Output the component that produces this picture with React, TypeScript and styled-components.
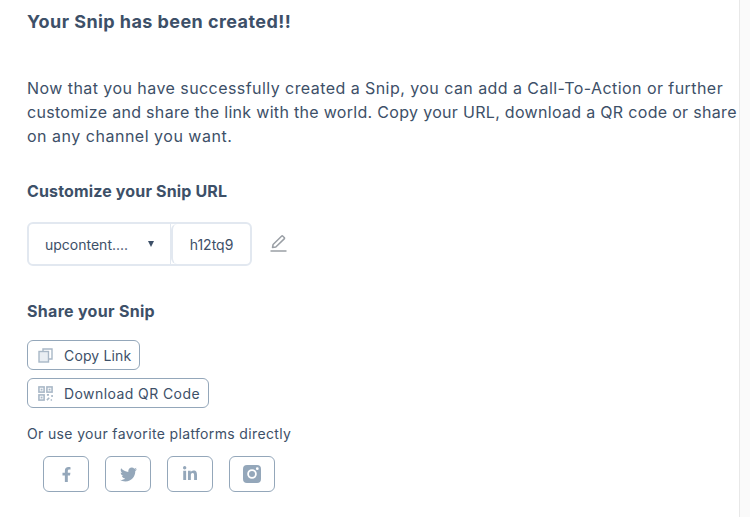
import React from 'react';
import styled, { createGlobalStyle } from 'styled-components';
import { FaFacebookF, FaTwitter, FaLinkedinIn } from 'react-icons/fa';

const GlobalStyle = createGlobalStyle`
    html, body {
        margin: 0;
        padding: 0;
        height: 100%;
        overflow: hidden;
        background: #fff;
    }
    body {
        font-family: Inter, "Open Sans", sans-serif;
        color: #3d5068;
    }
`;

const Page = styled.div`
    display: flex;
    width: 750px;
    height: 517px;
    overflow: hidden;
`;

const Content = styled.main`
    width: 739px;
    flex-shrink: 0;
    padding: 11px 0 0 27px;
    box-sizing: border-box;
    white-space: nowrap;
`;

const Scrollbar = styled.div`
    flex: 1;
    background: #fafafa;
    border-left: 1px solid #e8e8e8;
`;

const Title = styled.h1`
    margin: 0;
    font-size: 18px;
    line-height: 22px;
    font-weight: 700;
    letter-spacing: 0.43px;
`;

const Intro = styled.p`
    margin: 43px 0 0;
    font-size: 16px;
    line-height: 24px;
    font-weight: 400;
`;

const IntroLine = styled.span<{ $tracking: number }>`
    display: block;
    letter-spacing: ${p => p.$tracking}px;
`;

const SectionTitle = styled.h2<{ $top: number; $tracking: number }>`
    margin: ${p => p.$top}px 0 0;
    font-size: 16px;
    line-height: 22px;
    font-weight: 700;
    letter-spacing: ${p => p.$tracking}px;
`;

const UrlRow = styled.div`
    display: flex;
    align-items: center;
    margin-top: 20px;
`;

const UrlGroup = styled.div`
    display: flex;
    width: 225px;
    height: 44px;
    box-sizing: border-box;
    border: 2px solid #e2e8f0;
    border-radius: 6px;
    font-size: 14px;
`;

const DomainSelect = styled.div`
    width: 142px;
    display: flex;
    align-items: center;
    justify-content: space-between;
    box-sizing: border-box;
    padding: 0 16px 0 16px;
    border-right: 1px solid #e2e8f0;
`;

const Caret = styled.span`
    width: 0;
    height: 0;
    border-left: 3.5px solid transparent;
    border-right: 3.5px solid transparent;
    border-top: 6px solid #3d5068;
`;

const Slug = styled.div`
    flex: 1;
    display: flex;
    align-items: center;
    justify-content: center;
    border-left: 2px solid #e2e8f0;
    border-radius: 6px;
`;

const EditButton = styled.span`
    display: flex;
    margin: 0 0 2px 18px;
`;

const ActionList = styled.div`
    display: flex;
    flex-direction: column;
    align-items: flex-start;
    gap: 8px;
    margin-top: 18px;
`;

const ActionButton = styled.button<{ $tracking: number }>`
    display: flex;
    align-items: center;
    height: 30px;
    box-sizing: border-box;
    padding: 0 8px 0 10px;
    gap: 11px;
    background: #fff;
    border: 1px solid #94a7ba;
    border-radius: 6px;
    font-family: inherit;
    font-size: 14px;
    letter-spacing: ${p => p.$tracking}px;
    color: #3d5068;
`;

const Hint = styled.p`
    margin: 16px 0 0;
    font-size: 14px;
    line-height: 20px;
    letter-spacing: 0.35px;
`;

const SocialRow = styled.div`
    display: flex;
    gap: 16px;
    margin: 12px 0 0 16px;
`;

const SocialButton = styled.button<{ $size: number }>`
    display: flex;
    align-items: center;
    justify-content: center;
    width: 46px;
    height: 36px;
    padding: 0;
    background: #fff;
    border: 1px solid #94a7ba;
    border-radius: 6px;
    color: #94a7ba;
    font-size: ${p => p.$size}px;
`;

const EditIcon = () => (
    <svg width="17" height="17" viewBox="0 0 17 17" fill="none" stroke="#9a9fa5" strokeWidth="1.500" strokeLinejoin="round">
        <path d="M2.500 12.500l.6-3L11.500 1.200a1 1 0 0 1 1.400 0l1.300 1.300a1 1 0 0 1 0 1.400L5.800 12z" />
        <path d="M.5 16h16" />
    </svg>
);

const CopyIcon = () => (
    <svg width="15" height="15" viewBox="0 0 15 15" fill="none" stroke="#a9b8c7" strokeWidth="1.4">
        <path d="M5 3.500V1h9v10h-3.500" />
        <rect x="1" y="3.500" width="9.500" height="10.500" fill="#e9eef3" />
    </svg>
);

const QrIcon = () => (
    <svg width="15" height="15" viewBox="0 0 16 16" fill="#a9b8c7" stroke="#a9b8c7">
        <g fill="none" strokeWidth="1.700">
            <rect x="1" y="1" width="5.500" height="5.500" />
            <rect x="9.500" y="1" width="5.500" height="5.500" />
            <rect x="1" y="9.500" width="5.500" height="5.500" />
            <path d="M9.500 9.500h2.200M15 9.500v2.200M9.500 15l2.500-2.500M13.500 15h1.500" />
        </g>
        <rect x="3.300" y="3.300" width="1" height="1" />
        <rect x="11.800" y="3.300" width="1" height="1" />
        <rect x="3.300" y="11.800" width="1" height="1" />
    </svg>
);

const InstagramIcon = () => (
    <svg width="18" height="18" viewBox="0 0 18 18">
        <path
            fillRule="evenodd"
            fill="#94a7ba"
            d="M4 0h10a4 4 0 0 1 4 4v10a4 4 0 0 1-4 4H4a4 4 0 0 1-4-4V4a4 4 0 0 1 4-4zM9 4.200a4.800 4.800 0 1 0 0 9.600a4.800 4.800 0 0 0 0-9.600zM14.300 2.300a1.400 1.400 0 1 0 0 2.800a1.400 1.400 0 0 0 0-2.800z"
        />
        <circle cx="9" cy="9" r="3" fill="#94a7ba" />
    </svg>
);

export default function App() {
    return (
        <Page>
            <GlobalStyle />
            <Content>
                <Title>Your Snip has been created!!</Title>
                <Intro>
                    <IntroLine $tracking={0.44}>Now that you have successfully created a Snip, you can add a Call-To-Action or further</IntroLine>
                    <IntroLine $tracking={0.31}>customize and share the link with the world. Copy your URL, download a QR code or share</IntroLine>
                    <IntroLine $tracking={0.51}>on any channel you want.</IntroLine>
                </Intro>
                <SectionTitle $top={32} $tracking={0.15}>Customize your Snip URL</SectionTitle>
                <UrlRow>
                    <UrlGroup>
                        <DomainSelect>upcontent.... <Caret /></DomainSelect>
                        <Slug>h12tq9</Slug>
                    </UrlGroup>
                    <EditButton><EditIcon /></EditButton>
                </UrlRow>
                <SectionTitle $top={34} $tracking={0.3}>Share your Snip</SectionTitle>
                <ActionList>
                    <ActionButton $tracking={0.15}><CopyIcon />Copy Link</ActionButton>
                    <ActionButton $tracking={0.42}><QrIcon />Download QR Code</ActionButton>
                </ActionList>
                <Hint>Or use your favorite platforms directly</Hint>
                <SocialRow>
                    <SocialButton $size={15}><FaFacebookF /></SocialButton>
                    <SocialButton $size={17}><FaTwitter /></SocialButton>
                    <SocialButton $size={16}><FaLinkedinIn /></SocialButton>
                    <SocialButton $size={18}><InstagramIcon /></SocialButton>
                </SocialRow>
            </Content>
            <Scrollbar />
        </Page>
    );
}
